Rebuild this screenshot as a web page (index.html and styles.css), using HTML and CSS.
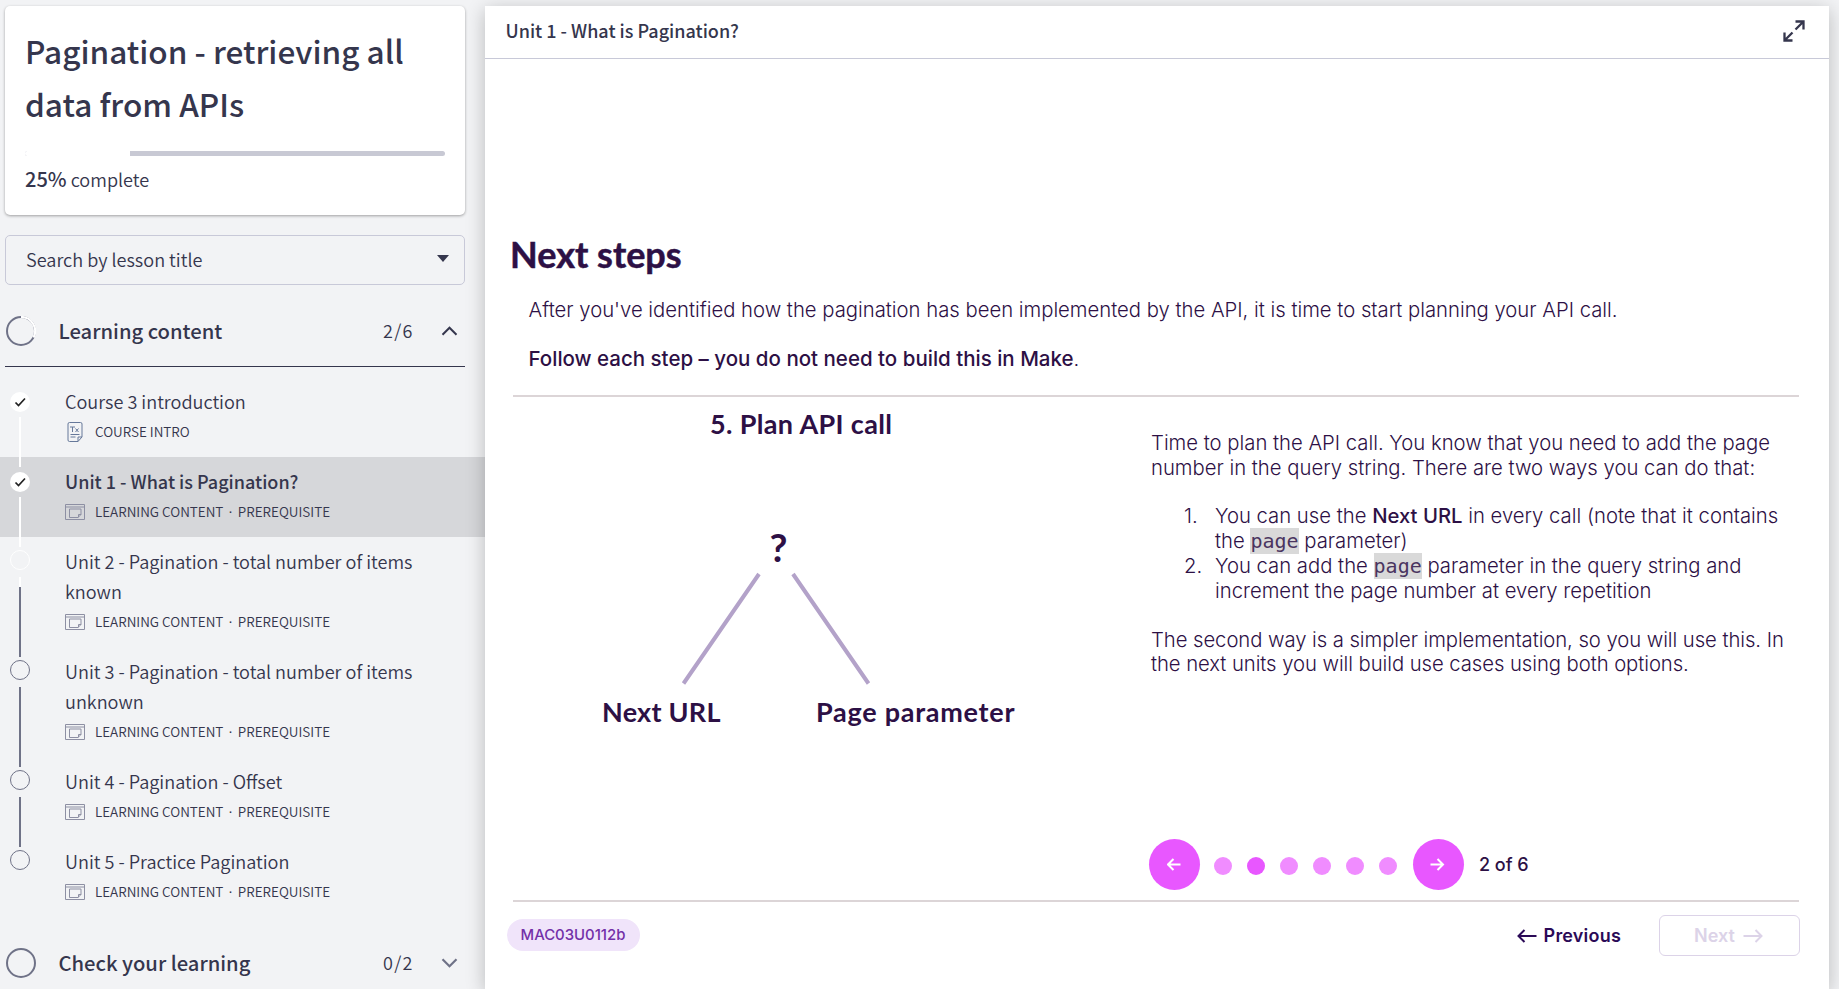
FILE: index.html
```html
<!DOCTYPE html>
<html lang="en">
<head>
<meta charset="utf-8">
<title>Pagination - retrieving all data from APIs</title>
<link rel="stylesheet" href="styles.css">
</head>
<body>
<svg width="0" height="0" class="defs" aria-hidden="true">
  <symbol id="doc" viewBox="0 0 20 20"><path d="M4.500.5h11q1.500 0 1.500 1.500v13l-4 4.500h-8.500q-1.500 0-1.500-1.500v-16q0-1.500 1.500-1.500zM17 15h-4v4.500M5.500 12.500h9M5.500 15h5M5 5h5M7.500 5v5M10.500 6.500l3 3.500M13.500 6.500l-3 3.500"/></symbol>
  <symbol id="win" viewBox="0 0 20 16"><path d="M.5.5h19v15h-19zM.5 3h19M4.500 5h11.500v5.500l-3 3h-8.500zM16 10.500h-2.500v3"/></symbol>
  <symbol id="tick" viewBox="0 0 20 20"><path d="M5.500 10.500l3 3L15 6.500"/></symbol>
</svg>
<div class="app">
  <aside class="side">
    <section class="card">
      <h1>Pagination - retrieving all data from APIs</h1>
      <div class="bar"><div class="bar-fill"></div></div>
      <p class="done"><b>25%</b> complete</p>
    </section>
    <div class="search"><span>Search by lesson title</span><svg width="12" height="7" viewBox="0 0 12 7"><path d="M0 0h12L6 7z" fill="#35364d"/></svg></div>
    <header class="sec open">
      <svg class="ring" width="30" height="30" viewBox="0 0 30 30"><circle cx="15" cy="15" r="14"/><path class="ring-done" d="M15 1a14 14 0 0 1 12.500 20.500"/></svg>
      <h2>Learning content</h2><span class="count">2/6</span>
      <svg class="chev" width="17" height="10" viewBox="0 0 17 10"><path d="M1.500 8.700l7-7 7 7"/></svg>
    </header>
    <ol class="items">
      <li class="item done-line"><span class="dot full"><svg><use href="#tick"/></svg></span><div class="title">Course 3 introduction</div><div class="meta"><svg class="ic tall"><use href="#doc"/></svg><span>COURSE INTRO</span></div></li>
      <li class="item active done-line"><span class="dot full"><svg><use href="#tick"/></svg></span><div class="title">Unit 1 - What is Pagination?</div><div class="meta"><svg class="ic"><use href="#win"/></svg><span>LEARNING CONTENT</span><i>·</i><span>PREREQUISITE</span></div></li>
      <li class="item part-line"><span class="dot next"></span><div class="title">Unit 2 - Pagination - total number of items known</div><div class="meta"><svg class="ic"><use href="#win"/></svg><span>LEARNING CONTENT</span><i>·</i><span>PREREQUISITE</span></div></li>
      <li class="item"><span class="dot"></span><div class="title">Unit 3 - Pagination - total number of items unknown</div><div class="meta"><svg class="ic"><use href="#win"/></svg><span>LEARNING CONTENT</span><i>·</i><span>PREREQUISITE</span></div></li>
      <li class="item"><span class="dot"></span><div class="title">Unit 4 - Pagination - Offset</div><div class="meta"><svg class="ic"><use href="#win"/></svg><span>LEARNING CONTENT</span><i>·</i><span>PREREQUISITE</span></div></li>
      <li class="item last"><span class="dot"></span><div class="title">Unit 5 - Practice Pagination</div><div class="meta"><svg class="ic"><use href="#win"/></svg><span>LEARNING CONTENT</span><i>·</i><span>PREREQUISITE</span></div></li>
    </ol>
    <header class="sec">
      <svg class="ring" width="30" height="30" viewBox="0 0 30 30"><circle cx="15" cy="15" r="14"/></svg>
      <h2>Check your learning</h2><span class="count">0/2</span>
      <svg class="chev dim" width="17" height="10" viewBox="0 0 17 10"><path d="M1.500 1.300l7 7 7-7"/></svg>
    </header>
  </aside>
  <main class="panel">
    <header class="top">
      <span>Unit 1 - What is Pagination?</span>
      <svg width="22" height="22" viewBox="0 0 22 22"><path d="M12.500 1.500h8v8M20.500 1.500l-8 8M1.500 12.500v8h8M1.500 20.500l8-8"/></svg>
    </header>
    <article class="lesson">
      <h2 class="steps">Next steps</h2>
      <p class="lead">After you've identified how the pagination has been implemented by the API, it is time to start planning your API call.</p>
      <p class="lead follow"><b>Follow each step – you do not need to build this in Make</b>.</p>
      <div class="body">
        <div class="left">
          <h3>5. Plan API call</h3>
          <svg class="tree" width="600" height="300" viewBox="0 0 600 300">
            <path d="M246 114L170.500 223.500M280 114L355.500 223.500"/>
            <text class="q" x="265.500" y="102">?</text>
            <text x="89" y="262" textLength="118.500">Next URL</text>
            <text x="303" y="262" textLength="198.500">Page parameter</text>
          </svg>
        </div>
        <div class="right">
          <p>Time to plan the API call. You know that you need to add the page number in the query string. There are two ways you can do that:</p>
          <ol>
            <li><span class="num">1.</span><span>You can use the <b>Next URL</b> in every call (note that it contains <br>the <code>page</code> parameter)</span></li>
            <li><span class="num">2.</span><span>You can add the <code>page</code> parameter in the query string and <br>increment the page number at every repetition</span></li>
          </ol>
          <p class="tight">The second way is a simpler implementation, so you will use this. In the next units you will build use cases using both options.</p>
          <nav class="pager">
            <span class="big"><svg width="16" height="16" viewBox="0 0 16 16"><path d="M13.500 7.500h-12M6.500 2L1 7.500l5.500 5.500"/></svg></span>
            <span class="dots"><i></i><i class="on"></i><i></i><i></i><i></i><i></i></span>
            <span class="big"><svg width="16" height="16" viewBox="0 0 16 16"><path d="M.5 7.500h12M7.500 2L13 7.500l-5.500 5.500"/></svg></span>
            <span class="pos">2 of 6</span>
          </nav>
        </div>
      </div>
      <footer class="foot">
        <span class="tag">MAC03U0112b</span>
        <span class="prev"><svg width="20" height="14" viewBox="0 0 20 14"><path d="M19.500 7H1.500M7.500 1L1.500 7l6 6"/></svg>Previous</span>
        <span class="nextb">Next<svg width="20" height="14" viewBox="0 0 20 14"><path d="M.5 7h18M12.500 1l6 6-6 6"/></svg></span>
      </footer>
    </article>
  </main>
</div>
</body>
</html>
```
FILE: styles.css
```css
* { box-sizing: border-box; margin: 0; padding: 0; }
body { background: #f2f3f5; overflow: hidden; }
.defs { display: block; }
.app { display: flex; height: 989px; overflow: hidden; font-family: "Noto Sans CJK SC", "Noto Sans", sans-serif; color: #35364d; }
ol { list-style: none; }
svg { fill: none; flex: none; display: block; }

.side { width: 485px; flex: none; padding-top: 6px; }
.card { margin: 0 20px 20px 5px; height: 209px; padding: 18px 20px 0; background: #fff; border-radius: 5px; box-shadow: 0 1px 3px rgba(0,0,0,.35); }
.card h1 { font-size: 31.550px; font-weight: 500; line-height: 53px; }
.bar { height: 5px; margin-top: 21px; background: #c8c9d4; border-radius: 3px; overflow: hidden; }
.bar-fill { width: 25%; height: 5px; background: #fff; }
.done { margin-top: 8px; font-size: 18.1px; line-height: 30px; font-weight: 350; }
.done b { font-weight: 500; font-size: 20px; }
.search { margin: 0 20px 11px 5px; height: 50px; padding: 0 15px 3px 20px; border: 1px solid #c8c9d8; border-radius: 5px; display: flex; align-items: center; justify-content: space-between; font-size: 18.1px; font-weight: 350; line-height: 30px; }

.sec { margin: 0 20px 0 5px; height: 71px; padding: 0 7px 1px 1px; display: flex; align-items: center; }
.sec.open { border-bottom: 1px solid #35364d; padding-bottom: 0; }
.sec h2 { margin-left: 22.500px; flex: 1; font-size: 20.200px; font-weight: 500; line-height: 30px; padding-bottom: 1px; }
.ring circle { stroke: #6f7287; stroke-width: 2; }
.ring .ring-done { stroke: #fff; stroke-width: 2.200; }
.count { font-size: 18px; font-weight: 350; letter-spacing: 1.200px; margin-right: 27.500px; padding-bottom: 2px; }
.chev path { stroke: #35364d; stroke-width: 2; }
.chev.dim path { stroke: #6f7287; stroke-width: 2.200; }

.items { padding: 10px 0 11px; }
.item { position: relative; padding: 9px 65px 11px 65px; }
.item.active { background: #d6d7da; }
.item::after { content: ""; position: absolute; left: 19px; top: 40px; bottom: -10px; width: 2px; background: #6f7287; z-index: 1; }
.item.done-line::after { background: #fff; }
.item.part-line::after { background: linear-gradient(#fff 10px, #6f7287 10px); }
.item.last::after { display: none; }
.dot { position: absolute; left: 10px; top: 13px; width: 20px; height: 20px; border: 1px solid #6f7287; border-radius: 50%; }
.dot.next { border-color: #fff; }
.dot.full { top: 15px; border: 0; background: #fff; }
.dot svg { width: 20px; height: 20px; stroke: #222; stroke-width: 1.700; }
.title { font-size: 18.100px; line-height: 30px; font-weight: 350; }
.active .title { font-weight: 500; font-size: 18px; }
.meta { display: flex; align-items: center; height: 30px; font-size: 13.480px; font-weight: 350; line-height: 30px; }
.meta i { font: normal 400 15px/30px "Liberation Sans", sans-serif; width: 14.500px; text-align: center; }
.ic { width: 20px; height: 16px; margin: 0 10px 0 0; stroke: #8d8fa3; stroke-width: 1; position: relative; top: 1px; }
.ic.tall { height: 20px; stroke: #66789a; }

.panel { width: 1344px; margin-top: 6px; background: #fff; box-shadow: 0 4px 18px rgba(0,0,0,.24); position: relative; z-index: 2; }
.top { height: 53px; padding: 0 24px 3px 20.500px; border-bottom: 1px solid #c8c9d8; display: flex; align-items: center; justify-content: space-between; font-size: 18px; font-weight: 500; line-height: 30px; }
.top span { padding-bottom: 1px; }
.top svg path { stroke: #35364d; stroke-width: 2.300; }

.lesson { padding: 172.500px 30px 0 28px; font-family: Inter, sans-serif; color: #2d1045; }
.steps { font: 700 36px/44px Lato, sans-serif; margin-left: -3px; -webkit-text-stroke: .5px #2d1045; }
.lead { margin: 19.500px 0 0 15.500px; font-size: 20.270px; line-height: 30px; font-weight: 300; white-space: nowrap; }
.lead.follow { margin-top: 19px; }
.lead b { font-weight: 500; font-size: 20.500px; }
.body { margin-top: 21px; height: 507px; border-top: 2px solid #dcd5d7; border-bottom: 2px solid #dcd5d7; display: flex; }
.left { width: 638px; flex: none; }
.left h3 { font: 700 27px/34px Lato, sans-serif; margin: 10px 0 0 197px; letter-spacing: .35px; }
.tree { margin-top: 19px; overflow: visible; }
.tree path { stroke: #b3a2c9; stroke-width: 4; }
.tree text { fill: #2d1045; font: 700 27px Lato, sans-serif; }
.tree .q { font-size: 39px; text-anchor: middle; }
.right { flex: 1; padding-top: 34px; }
.right p { font-size: 20.270px; font-weight: 300; line-height: 24.500px; }
.right .tight { letter-spacing: -.06px; }
.right ol { margin: 23px 0 24.500px 33px; }
.right li { display: flex; font-size: 20.270px; font-weight: 300; line-height: 25px; white-space: nowrap; }
.num { width: 31px; }
.right b { font-weight: 500; }
code { font: 20px/20px "DejaVu Sans Mono", monospace; color: #4a3560; background: #d9d9d9; padding: 1px 0; }
.pager { display: flex; align-items: center; margin: 162.500px 0 0 -2px; }
.big { width: 51px; height: 51px; border-radius: 50%; background: #e857ff; display: flex; align-items: center; justify-content: center; }
.big path { stroke: #fff; stroke-width: 2; }
.dots { display: flex; gap: 15.200px; margin: 3px 15.500px 0 13.500px; }
.dots i { width: 18px; height: 18px; border-radius: 50%; background: #f08cff; }
.dots .on { background: #e857ff; }
.pos { margin-left: 15px; font-size: 18px; font-weight: 500; }
.foot { display: flex; align-items: center; padding-top: 13px; }
.tag { margin: -2px 0 0 -6px; width: 133px; height: 32px; border-radius: 16px; background: #f0e4fa; color: #7330a8; font-size: 14.900px; font-weight: 500; line-height: 33px; text-align: center; padding-right: 1px; }
.prev { margin-left: auto; display: flex; align-items: center; gap: 7px; font-size: 18px; font-weight: 600; color: #2b0a57; letter-spacing: .2px; }
.prev path { stroke: #2b0a57; stroke-width: 2; }
.nextb { margin: 0 -1px 0 38px; width: 141px; height: 41px; border: 1.500px solid #dcd3e8; border-radius: 6px; display: flex; align-items: center; justify-content: center; gap: 8px; font-size: 18px; font-weight: 600; color: #dcd3e8; padding-right: 2px; }
.nextb path { stroke: #dcd3e8; stroke-width: 2; }
```
